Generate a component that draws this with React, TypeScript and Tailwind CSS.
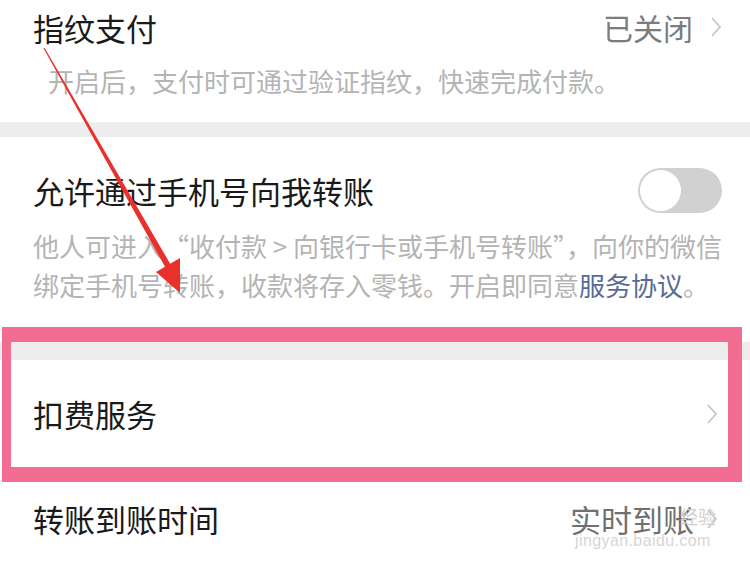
const FONT = "font-['Noto_Sans_CJK_SC','Noto_Sans',sans-serif]";

function Chevron() {
  return (
    <svg width="12" height="22" viewBox="0 0 12 22" className="shrink-0">
      <polyline points="2,2 10,11 2,20" fill="none" stroke="#c4c4c4" strokeWidth="1.7" />
    </svg>
  );
}

function Toggle() {
  return (
    <div className="w-[84px] h-[45px] rounded-full bg-[#d1d1d1] p-[2px] flex items-center">
      <div className="w-[41px] h-[41px] rounded-full bg-white" />
    </div>
  );
}

export default function App() {
  return (
    <div className={`relative w-[750px] h-[570px] overflow-hidden bg-white ${FONT}`}>
      {/* 指纹支付 */}
      <div className="pl-[33px] pr-[28px] pb-[17px]">
        <div className="-mt-[3px] h-[60px] flex items-center justify-between">
          <span className="text-[31px] leading-none text-[#1a1a1a]">指纹支付</span>
          <div className="flex items-center gap-[17px]">
            <span className="text-[30px] leading-none text-[#7c7c7c]">已关闭</span>
            <Chevron />
          </div>
        </div>
        <p className="pl-[15px] text-[26px] leading-[48px] text-[#b4b4b4] whitespace-nowrap">
          开启后，支付时可通过验证指纹，快速完成付款。
        </p>
      </div>
      <div className="h-[15px] bg-[#ededed]" />

      {/* 允许通过手机号向我转账 */}
      <div className="pl-[33px] pr-[28px] pt-[23px] pb-[38px]">
        <div className="h-[60px] flex items-center justify-between">
          <span className="text-[31px] leading-none text-[#1a1a1a]">允许通过手机号向我转账</span>
          <Toggle />
        </div>
        <p className="mt-[6px] text-[26px] leading-[39px] text-[#b4b4b4] whitespace-nowrap">
          他人可进入“收付款 &gt; 向银行卡或手机号转账”，向你的微信
          <br />
          绑定手机号转账，收款将存入零钱。开启即同意
          <span className="text-[#576b95]">服务协议</span>。
        </p>
      </div>
      <div className="h-[18px] bg-[#ededed]" />

      {/* 扣费服务 */}
      <div className="h-[107px] pl-[33px] pr-[32px] flex items-center justify-between">
        <span className="text-[31px] leading-none text-[#1a1a1a]">扣费服务</span>
        <Chevron />
      </div>

      {/* 转账到账时间 */}
      <div className="relative h-[103px] pl-[33px] pr-[32px] flex items-center justify-between">
        <span className="text-[31px] leading-none text-[#1a1a1a]">转账到账时间</span>
        <div className="flex items-center gap-[12px]">
          <span className="text-[31px] leading-none text-[#707070]">实时到账</span>
          <Chevron />
        </div>
        {/* watermark */}
        <div className="absolute left-[575px] top-[66px] text-[16px] leading-none tracking-[0.4px] text-[#d6d6d6] font-['Liberation_Sans',sans-serif]">
          jingyan.baidu.com
        </div>
        <div className="absolute left-[680px] top-[40px] text-[18px] leading-none text-[#d0d0d0]">经验</div>
      </div>

      {/* annotation: pink highlight box */}
      <div className="absolute left-[2px] top-[327px] w-[740px] h-[155px] border-[#f26d91] border-l-[9px] border-t-[15px] border-r-[14px] border-b-[15px]" />

      {/* annotation: red arrow */}
      <svg className="absolute left-0 top-0 pointer-events-none" width="750" height="570" viewBox="0 0 750 570">
        <polygon points="43.5,48.3 44.5,47.7 170.6,264.5 165.4,267.5" fill="#e8302c" />
        <polygon points="156,272 180,258 180,293" fill="#e8302c" />
      </svg>
    </div>
  );
}
